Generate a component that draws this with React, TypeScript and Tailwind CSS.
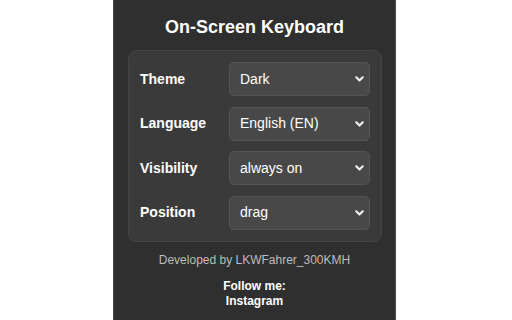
import { useState } from "react";

const settings = [
  { label: "Theme", value: "Dark", options: ["Dark", "Light"] },
  { label: "Language", value: "English (EN)", options: ["English (EN)", "Deutsch (DE)"] },
  { label: "Visibility", value: "always on", options: ["always on", "on focus", "off"] },
  { label: "Position", value: "drag", options: ["drag", "bottom", "top"] },
] as const;

function Chevron() {
  return (
    <svg
      className="pointer-events-none absolute right-[6px] top-1/2 -translate-y-1/2"
      width="9"
      height="6"
      viewBox="0 0 9 6"
      fill="none"
      aria-hidden
    >
      <path d="M1.3 1.3 4.5 4.5l3.2-3.2" stroke="#f2f2f2" strokeWidth="2.1" strokeLinecap="round" strokeLinejoin="round" />
    </svg>
  );
}

function SettingRow({ label, value, options }: { label: string; value: string; options: readonly string[] }) {
  const [current, setCurrent] = useState(value);
  return (
    <div className="flex items-center">
      <span className="w-[89px] text-[14px] font-bold text-white">{label}</span>
      <div className="relative flex-1">
        <select
          value={current}
          onChange={(e) => setCurrent(e.target.value)}
          className="h-[34px] w-full appearance-none rounded-[5px] border border-[#545454] bg-[#484848] pl-[10px] text-[14px] text-white outline-none"
        >
          {options.map((o) => (
            <option key={o} value={o}>
              {o}
            </option>
          ))}
        </select>
        <Chevron />
      </div>
    </div>
  );
}

export default function App() {
  return (
    <div className="flex h-[320px] w-[512px] bg-white font-['Liberation_Sans',Arial,sans-serif]">
      <div className="ml-[113px] flex h-full w-[283px] flex-col border-x border-[#4a4a4a] bg-[#2f2f2f]">
        <h1 className="pt-[16px] text-center text-[18px] font-bold leading-[22px] text-white">
          On-Screen Keyboard
        </h1>
        <div className="ml-[14px] mt-[12px] flex w-[254px] flex-col gap-[10.6px] rounded-[8px] border border-[#444] bg-[#3a3a3a] p-[11px]">
          {settings.map((s) => (
            <SettingRow key={s.label} label={s.label} value={s.value} options={s.options} />
          ))}
        </div>
        <p className="mt-[11px] text-center text-[12px] leading-[14px] text-[#bdbdbd]">
          Developed by LKWFahrer_300KMH
        </p>
        <div className="mt-[12px] text-center text-[12px] font-bold leading-[15px] text-white">
          <p>Follow me:</p>
          <a href="#" className="text-white">
            Instagram
          </a>
        </div>
      </div>
    </div>
  );
}
